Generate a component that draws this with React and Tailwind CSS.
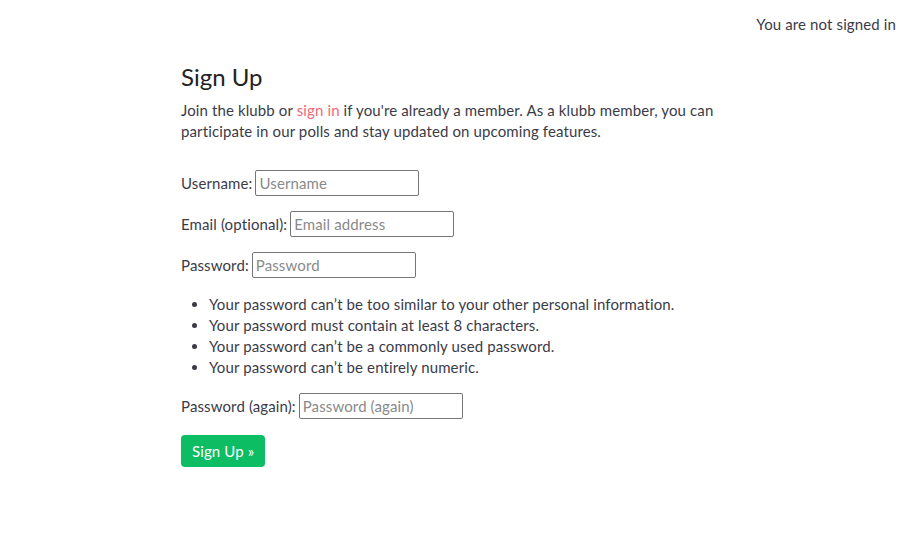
export default function App() {
  const rules = [
    "Your password can’t be too similar to your other personal information.",
    "Your password must contain at least 8 characters.",
    "Your password can’t be a commonly used password.",
    "Your password can’t be entirely numeric.",
  ];

  return (
    <div className="min-h-[554px] bg-white text-[15px] tracking-[0.12px] text-[#3b3b48] font-['Lato',sans-serif]">
      {/* top bar */}
      <div className="flex justify-end pt-[14px] pr-[11px] leading-[21px]">
        You are not signed in
      </div>

      <div className="mx-auto w-[545px] pt-[27px]">
        <h1 className="text-[24px] leading-[30px] tracking-normal text-[#222]">Sign Up</h1>
        <p className="mt-[8px] leading-[21px]">
          Join the klubb or{" "}
          <a href="#" className="text-[#f0687a]">
            sign in
          </a>{" "}
          if you're already a member. As a klubb member, you can participate in
          our polls and stay updated on upcoming features.
        </p>

        <form className="mt-[28px] flex flex-col">
          <Field label="Username:" placeholder="Username" />
          <Field label="Email (optional):" placeholder="Email address" className="mt-[15px]" />
          <Field label="Password:" placeholder="Password" type="password" className="mt-[15px]" />

          <ul className="mt-[16px] ml-[28px] list-disc leading-[21px]">
            {rules.map((r, i) => (
              <li key={i}>{r}</li>
            ))}
          </ul>

          <Field
            label="Password (again):"
            placeholder="Password (again)"
            type="password"
            className="mt-[15px]"
          />

          <div className="mt-[16px]">
            <button
              type="button"
              className="h-[32px] rounded-[4px] bg-[#0dbd63] px-[11px] text-white"
            >
              Sign Up »
            </button>
          </div>
        </form>
      </div>
    </div>
  );
}

function Field({ label, placeholder, type = "text", className = "" }) {
  return (
    <div className={`flex items-center gap-[3px] ${className}`}>
      <label>{label}</label>
      <input
        type={type}
        placeholder={placeholder}
        className="h-[26px] w-[164px] rounded-[2px] border border-[#767676] px-[3px] text-[15px] placeholder:text-[#8a8a8a] outline-none"
      />
    </div>
  );
}
